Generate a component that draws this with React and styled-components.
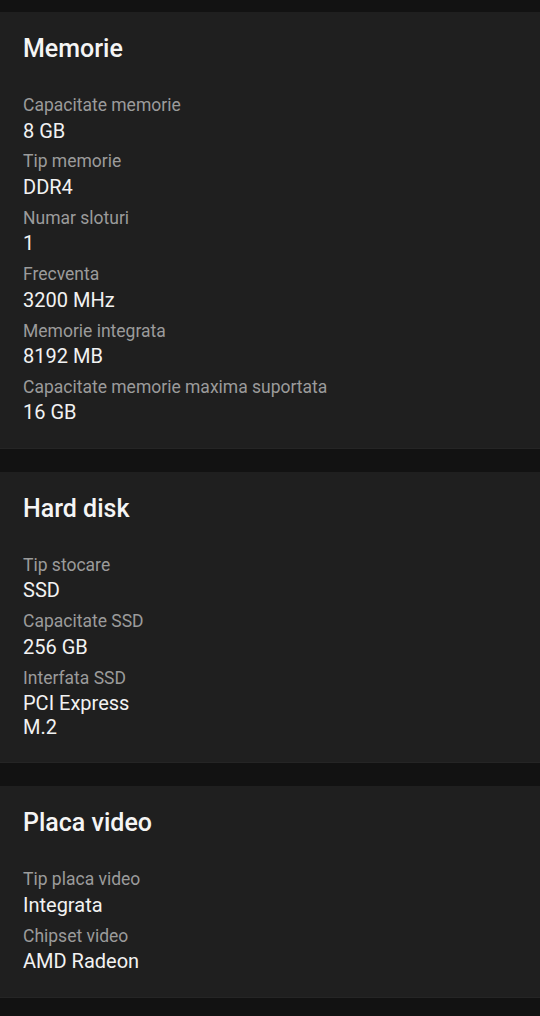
import React from 'react';
import styled, { createGlobalStyle } from 'styled-components';

const GlobalStyle = createGlobalStyle`
  html, body {
    margin: 0;
    padding: 0;
    background: #121212;
  }
  body {
    font-family: Roboto, "Noto Sans", sans-serif;
    -webkit-font-smoothing: antialiased;
  }
`;

const Page = styled.div`
  display: flex;
  flex-direction: column;
  gap: 23px;
  padding-top: 12px;
  padding-bottom: 20px;
  background: #121212;
`;

const Card = styled.section`
  background: #1f1f1f;
  box-shadow: inset 0 -1px 0 #252525;
  padding: 22px 23px 24px;
`;

const Title = styled.h2`
  margin: 0 0 31px;
  font-size: 25px;
  line-height: 30px;
  font-weight: 500;
  color: #f5f5f5;
`;

const SpecList = styled.dl`
  margin: 0;
  display: flex;
  flex-direction: column;
  gap: 8.4px;
`;

const Spec = styled.div`
  display: flex;
  flex-direction: column;
  gap: 4px;
`;

const Label = styled.dt`
  font-size: 17.5px;
  line-height: 20.5px;
  color: #9b9b9b;
`;

const Value = styled.dd`
  margin: 0;
  font-size: 20px;
  line-height: 23.5px;
  color: #f2f2f2;
  max-width: ${(p) => (p.$narrow ? '125px' : 'none')};
`;

const sections = [
  {
    title: 'Memorie',
    specs: [
      ['Capacitate memorie', '8 GB'],
      ['Tip memorie', 'DDR4'],
      ['Numar sloturi', '1'],
      ['Frecventa', '3200 MHz'],
      ['Memorie integrata', '8192 MB'],
      ['Capacitate memorie maxima suportata', '16 GB'],
    ],
  },
  {
    title: 'Hard disk',
    specs: [
      ['Tip stocare', 'SSD'],
      ['Capacitate SSD', '256 GB'],
      ['Interfata SSD', 'PCI Express M.2'],
    ],
  },
  {
    title: 'Placa video',
    specs: [
      ['Tip placa video', 'Integrata'],
      ['Chipset video', 'AMD Radeon'],
    ],
  },
];

const App = () => (
  <>
    <GlobalStyle />
    <Page>
      {sections.map((s) => (
        <Card key={s.title}>
          <Title>{s.title}</Title>
          <SpecList>
            {s.specs.map(([label, value]) => (
              <Spec key={label}>
                <Label>{label}</Label>
                <Value $narrow>{value}</Value>
              </Spec>
            ))}
          </SpecList>
        </Card>
      ))}
    </Page>
  </>
);

export default App;
